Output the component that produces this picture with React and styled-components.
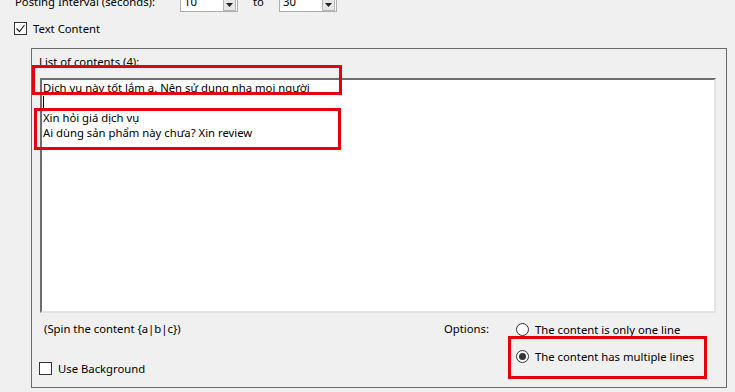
import styled, { createGlobalStyle } from "styled-components";

const GlobalStyle = createGlobalStyle`
  html, body {
    margin: 0;
    padding: 0;
    background: #f0f0f0;
    overflow: hidden;
  }
  body {
    font-family: "Noto Sans", "Open Sans", sans-serif;
    font-size: 11.3px;
    color: #000;
  }
`;

const Page = styled.div`
  position: relative;
  display: flow-root;
  width: 735px;
  height: 392px;
  padding-left: 14px;
  box-sizing: border-box;
`;

const TopRow = styled.div`
  display: flex;
  align-items: center;
  height: 22px;
  margin-top: -10px;
`;

const TopLabel = styled.span`
  width: 165px;
  padding-left: 1px;
  line-height: 15px;
`;

const Combo = styled.div`
  width: 58px;
  height: 22px;
  box-sizing: border-box;
  border: 1px solid #adadad;
  background: #fff;
  display: flex;
  align-items: center;
  justify-content: space-between;
  padding: 0 1px 0 3px;
`;

const ComboButton = styled.div`
  width: 13px;
  height: 12px;
  margin-top: 8px;
  box-sizing: border-box;
  border: 1px solid #b5b5b5;
  background: #e6e6e6;
  display: flex;
  align-items: center;
  justify-content: center;
`;

const ToLabel = styled.span`
  width: 41px;
  text-align: center;
`;

const CheckRow = styled.label`
  display: flex;
  align-items: center;
  gap: 6px;
  height: 15px;
  margin-top: ${(p) => p.$top ?? 9}px;
`;

const Box = styled.span`
  width: 13px;
  height: 13px;
  box-sizing: border-box;
  border: 1px solid #333;
  background: #fff;
  display: flex;
  align-items: center;
  justify-content: center;
`;

const Group = styled.div`
  margin-top: 12px;
  margin-left: 17px;
  width: 696px;
  height: 340px;
  box-sizing: border-box;
  border: 1px solid #6a6a6a;
  padding: 5px 10px 0 7px;
  display: flex;
  flex-direction: column;
`;

const GroupLabel = styled.div`
  line-height: 15px;
  height: 15px;
`;

const TextBox = styled.div`
  margin-top: 9px;
  margin-left: 1px;
  width: 676px;
  height: 235px;
  box-sizing: border-box;
  background: #fff;
  border-top: 2px solid #6e6e6e;
  border-left: 2px solid #6e6e6e;
  border-right: 2px solid #e3e3e3;
  border-bottom: 2px solid #e3e3e3;
  padding: 0 1px;
  line-height: 15px;
`;

const Line = styled.div`
  height: 15px;
  white-space: nowrap;
`;

const Caret = styled.span`
  display: inline-block;
  width: 1px;
  height: 13px;
  margin-top: 1px;
  background: #000;
`;

const Bottom = styled.div`
  display: flex;
  margin-top: 8px;
  flex: 1;
`;

const LeftCol = styled.div`
  flex: 1;
  display: flex;
  flex-direction: column;
  justify-content: space-between;
  padding-bottom: 11px;
`;

const Spin = styled.div`
  line-height: 15px;
  padding-left: 5px;
`;

const OptionsLabel = styled.div`
  width: 72px;
  line-height: 15px;
`;

const RadioCol = styled.div`
  width: 200px;
  display: flex;
  flex-direction: column;
  gap: 11px;
`;

const RadioRow = styled.label`
  display: flex;
  align-items: center;
  gap: 6px;
  height: 15px;
  margin-top: 1px;
`;

const RadioDot = styled.span`
  width: 13px;
  height: 13px;
  box-sizing: border-box;
  border: 1px solid #333;
  border-radius: 50%;
  background: #fff;
  display: flex;
  align-items: center;
  justify-content: center;
  &::after {
    content: "";
    width: 7px;
    height: 7px;
    border-radius: 50%;
    background: ${(p) => (p.$on ? "#333" : "transparent")};
  }
`;

const Mark = styled.div`
  position: absolute;
  left: ${(p) => p.$x}px;
  top: ${(p) => p.$y}px;
  width: ${(p) => p.$w}px;
  height: ${(p) => p.$h}px;
  box-sizing: border-box;
  border: 3px solid #e5000f;
  pointer-events: none;
`;

function Arrow() {
  return (
    <svg width="7" height="4" viewBox="0 0 7 4">
      <path d="M0 0h7L3.5 4z" fill="#222" />
    </svg>
  );
}

function Tick() {
  return (
    <svg width="11" height="11" viewBox="0 0 11 11">
      <path d="M1.5 5.5l3 3 5-6.5" fill="none" stroke="#222" strokeWidth="1.2" />
    </svg>
  );
}

export default function App() {
  return (
    <Page>
      <GlobalStyle />
      <TopRow>
        <TopLabel>Posting Interval (seconds):</TopLabel>
        <Combo>
          <span>10</span>
          <ComboButton>
            <Arrow />
          </ComboButton>
        </Combo>
        <ToLabel>to</ToLabel>
        <Combo>
          <span>30</span>
          <ComboButton>
            <Arrow />
          </ComboButton>
        </Combo>
      </TopRow>

      <CheckRow>
        <Box>
          <Tick />
        </Box>
        Text Content
      </CheckRow>

      <Group>
        <GroupLabel>List of contents (4):</GroupLabel>
        <TextBox>
          <Line>Dịch vụ này tốt lắm ạ. Nên sử dụng nha mọi người</Line>
          <Line>
            <Caret />
          </Line>
          <Line>Xin hỏi giá dịch vụ</Line>
          <Line>Ai dùng sản phẩm này chưa? Xin review</Line>
        </TextBox>
        <Bottom>
          <LeftCol>
            <Spin>(Spin the content {"{a|b|c}"})</Spin>
            <CheckRow $top={0}>
              <Box />
              Use Background
            </CheckRow>
          </LeftCol>
          <OptionsLabel>Options:</OptionsLabel>
          <RadioCol>
            <RadioRow>
              <RadioDot />
              The content is only one line
            </RadioRow>
            <RadioRow>
              <RadioDot $on />
              The content has multiple lines
            </RadioRow>
          </RadioCol>
        </Bottom>
      </Group>

      <Mark $x={32} $y={65} $w={310} $h={30} />
      <Mark $x={34} $y={108} $w={307} $h={42} />
      <Mark $x={508} $y={336} $w={199} $h={43} />
    </Page>
  );
}
